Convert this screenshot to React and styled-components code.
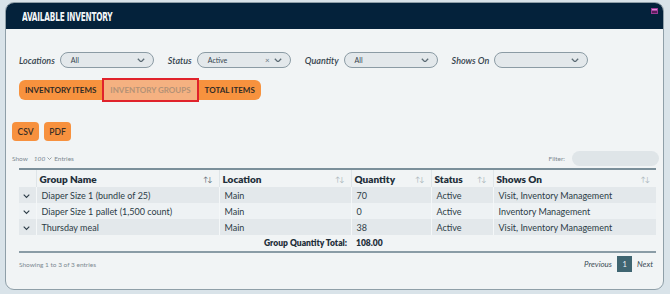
import React from "react";
import styled, { createGlobalStyle } from "styled-components";

const Global = createGlobalStyle`
  html, body { margin: 0; padding: 0; background: #d9e3e9; }
  body { font-family: Lato, "Open Sans", sans-serif; color: #2c3c46; }
`;

const Card = styled.div`
  margin: 2px 4px 0 5px;
  width: 659px;
  height: 288px;
  border: 1px solid #8f9fa8;
  border-radius: 9px;
  background: #f1f4f5;
  overflow: hidden;
  box-sizing: border-box;
  display: flex;
  flex-direction: column;
`;

const Header = styled.div`
  height: 26px;
  flex: none;
  background: #04223b;
  display: flex;
  align-items: center;
  justify-content: space-between;
  padding: 0 6px 0 16px;
  position: relative;
`;

const Title = styled.div`
  font-family: "DejaVu Sans Condensed", "DejaVu Sans", sans-serif;
  color: #f3f6f8;
  font-size: 12px;
  font-weight: 700;
  letter-spacing: -0.3px;
  transform: scaleX(0.68);
  transform-origin: left center;
  margin-top: 1px;
  white-space: nowrap;
`;

const Body = styled.div`
  padding: 22px 4px 0 6px;
  display: flex;
  flex-direction: column;
`;

const FilterRow = styled.div`
  display: flex;
  align-items: center;
  margin-left: 7px;
  gap: 14px;
  height: 18px;
`;

const FilterGroup = styled.div`
  display: flex;
  align-items: center;
  gap: 5px;
`;

const Label = styled.span`
  font-size: 9px;
  font-style: italic;
  font-weight: 600;
  color: #34434d;
`;

const Select = styled.div`
  width: 94px;
  height: 16px;
  box-sizing: border-box;
  border: 1px solid #8b9ba4;
  border-radius: 8px;
  background: #e3e8eb;
  display: flex;
  align-items: center;
  padding: 0 8px 0 10px;
  font-size: 7px;
  color: #34434d;
  gap: 4px;
`;

const SelectValue = styled.span`
  flex: 1;
`;

const Clear = styled.span`
  font-size: 8px;
  color: #6b7a83;
`;

const Chevron = ({ size = 8, color = "#5d6c75" }) => (
  <svg width={size} height={size * 0.6} viewBox="0 0 10 6">
    <path d="M1 1 L5 5 L9 1" fill="none" stroke={color} strokeWidth="1.6" />
  </svg>
);

const Tabs = styled.div`
  display: flex;
  margin: 11px 0 0 7px;
  gap: 2px;
`;

const Tab = styled.div`
  height: 20px;
  display: flex;
  align-items: center;
  padding: 0 ${(p) => p.$px || 6}px;
  font-size: 8px;
  font-weight: 700;
  background: ${(p) => (p.$active ? "#f5b181" : "#f7923e")};
  color: ${(p) => (p.$active ? "#b49176" : "#2f2a26")};
  border-radius: ${(p) => p.$radius || "0"};
  outline: ${(p) => (p.$active ? "2px solid #e0222b" : "none")};
  outline-offset: 0px;
  position: relative;
  z-index: ${(p) => (p.$active ? 1 : 0)};
`;

const Exports = styled.div`
  display: flex;
  gap: 5px;
  margin-top: 22px;
`;

const ExportBtn = styled.div`
  width: 27px;
  height: 19px;
  display: flex;
  align-items: center;
  justify-content: center;
  border-radius: 4px;
  background: #f7913e;
  color: #3a2f26;
  font-size: 8.5px;
  font-weight: 600;
`;

const ToolRow = styled.div`
  display: flex;
  align-items: center;
  justify-content: space-between;
  margin-top: 9px;
  height: 16px;
`;

const Tiny = styled.span`
  font-size: 6.5px;
  color: #7d8a92;
  display: flex;
  align-items: center;
  gap: 2px;
`;

const TinyItalic = styled.span`
  font-style: italic;
  margin-left: 4px;
`;

const FilterInput = styled.div`
  width: 87px;
  height: 15px;
  border-radius: 8px;
  background: #dfe5e8;
  margin-left: 5px;
`;

const Table = styled.table`
  margin: 2px 0 0 7px;
  width: 637px;
  border-collapse: collapse;
  table-layout: fixed;
  border-top: 2px solid #7b8f9a;
  border-bottom: 2px solid #8a9ca6;
`;

const Th = styled.th`
  height: 17px;
  text-align: left;
  font-size: 10px;
  font-weight: 800;
  color: #1f2f3a;
  padding: 0 3px;
  border-left: 1px solid #dfe5e8;
  position: relative;
  &:first-child { border-left: none; }
`;

const ThInner = styled.div`
  display: flex;
  align-items: center;
  justify-content: space-between;
`;

const Sort = styled.span`
  font-size: 7px;
  font-weight: 400;
  color: ${(p) => (p.$on ? "#5a6a74" : "#aab5bb")};
  letter-spacing: -1px;
  margin-right: 4px;
`;

const Tr = styled.tr`
  background: ${(p) => (p.$alt ? "#eef2f4" : "#e3e8eb")};
`;

const Td = styled.td`
  height: 16px;
  padding: 0 0 0 ${(p) => p.$pl ?? 5}px;
  font-size: 9px;
  color: #2c3c46;
  border-left: 1px solid #f4f7f8;
  white-space: nowrap;
  &:first-child { border-left: none; }
`;

const TotalTd = styled.td`
  height: 16px;
  font-size: 8.5px;
  font-weight: 800;
  color: #1f2f3a;
  text-align: ${(p) => p.$align || "left"};
  padding: 0 4px 0 5px;
`;

const Footer = styled.div`
  display: flex;
  align-items: center;
  justify-content: space-between;
  margin: 2px 6px 0 7px;
  height: 18px;
`;

const Pager = styled.div`
  display: flex;
  align-items: center;
  gap: 5px;
  font-size: 8px;
  font-style: italic;
  color: #3d4d57;
`;

const PageNum = styled.div`
  width: 15px;
  height: 16px;
  background: #3f6571;
  color: #eef3f5;
  font-style: normal;
  font-size: 7.5px;
  display: flex;
  align-items: center;
  justify-content: center;
`;

const WinIcon = styled.svg`
  position: absolute;
  right: 5px;
  top: 5px;
`;

const rows = [
  ["Diaper Size 1 (bundle of 25)", "Main", "70", "Active", "Visit, Inventory Management"],
  ["Diaper Size 1 pallet (1,500 count)", "Main", "0", "Active", "Inventory Management"],
  ["Thursday meal", "Main", "38", "Active", "Visit, Inventory Management"],
];

export default function App() {
  return (
    <>
      <Global />
      <Card>
        <Header>
          <Title>AVAILABLE INVENTORY</Title>
          <WinIcon width="7" height="6" viewBox="0 0 7 6">
            <rect x="0" y="0" width="7" height="6" fill="#9a3a96" />
            <rect x="1" y="1" width="5" height="1.2" fill="#e58ad9" />
            <rect x="1" y="3" width="5" height="2" fill="#5a1c5a" />
          </WinIcon>
        </Header>
        <Body>
          <FilterRow>
            <FilterGroup>
              <Label>Locations</Label>
              <Select><SelectValue>All</SelectValue><Chevron /></Select>
            </FilterGroup>
            <FilterGroup>
              <Label>Status</Label>
              <Select><SelectValue>Active</SelectValue><Clear>×</Clear><Chevron /></Select>
            </FilterGroup>
            <FilterGroup>
              <Label>Quantity</Label>
              <Select><SelectValue>All</SelectValue><Chevron /></Select>
            </FilterGroup>
            <FilterGroup>
              <Label>Shows On</Label>
              <Select><SelectValue></SelectValue><Chevron /></Select>
            </FilterGroup>
          </FilterRow>
          <Tabs>
            <Tab $radius="6px 0 0 6px" $px={6}>INVENTORY ITEMS</Tab>
            <Tab $active $px={6}>INVENTORY GROUPS</Tab>
            <Tab $radius="0 6px 6px 0" $px={6}>TOTAL ITEMS</Tab>
          </Tabs>
          <Exports>
            <ExportBtn>CSV</ExportBtn>
            <ExportBtn>PDF</ExportBtn>
          </Exports>
          <ToolRow>
            <Tiny>
              Show <TinyItalic>100</TinyItalic>
              <Chevron size={5} color="#7d8a92" /> Entries
            </Tiny>
            <Tiny>
              Filter:<FilterInput />
            </Tiny>
          </ToolRow>
          <Table>
            <colgroup>
              <col style={{ width: 17 }} />
              <col style={{ width: 183 }} />
              <col style={{ width: 132 }} />
              <col style={{ width: 80 }} />
              <col style={{ width: 62 }} />
              <col style={{ width: 163 }} />
            </colgroup>
            <thead>
              <tr>
                <Th />
                <Th><ThInner>Group Name<Sort $on>↑↓</Sort></ThInner></Th>
                <Th><ThInner>Location<Sort>↑↓</Sort></ThInner></Th>
                <Th><ThInner>Quantity<Sort>↑↓</Sort></ThInner></Th>
                <Th><ThInner>Status<Sort>↑↓</Sort></ThInner></Th>
                <Th><ThInner>Shows On<Sort>↑↓</Sort></ThInner></Th>
              </tr>
            </thead>
            <tbody>
              {rows.map((r, i) => (
                <Tr key={i} $alt={i === 1}>
                  <Td $pl={4}><Chevron size={7} color="#2c3c46" /></Td>
                  {r.map((c, j) => (
                    <Td key={j}>{c}</Td>
                  ))}
                </Tr>
              ))}
              <tr>
                <TotalTd colSpan={3} $align="right">Group Quantity Total:</TotalTd>
                <TotalTd colSpan={3}>108.00</TotalTd>
              </tr>
            </tbody>
          </Table>
          <Footer>
            <Tiny>Showing 1 to 3 of 3 entries</Tiny>
            <Pager>
              Previous
              <PageNum>1</PageNum>
              Next
            </Pager>
          </Footer>
        </Body>
      </Card>
    </>
  );
}
